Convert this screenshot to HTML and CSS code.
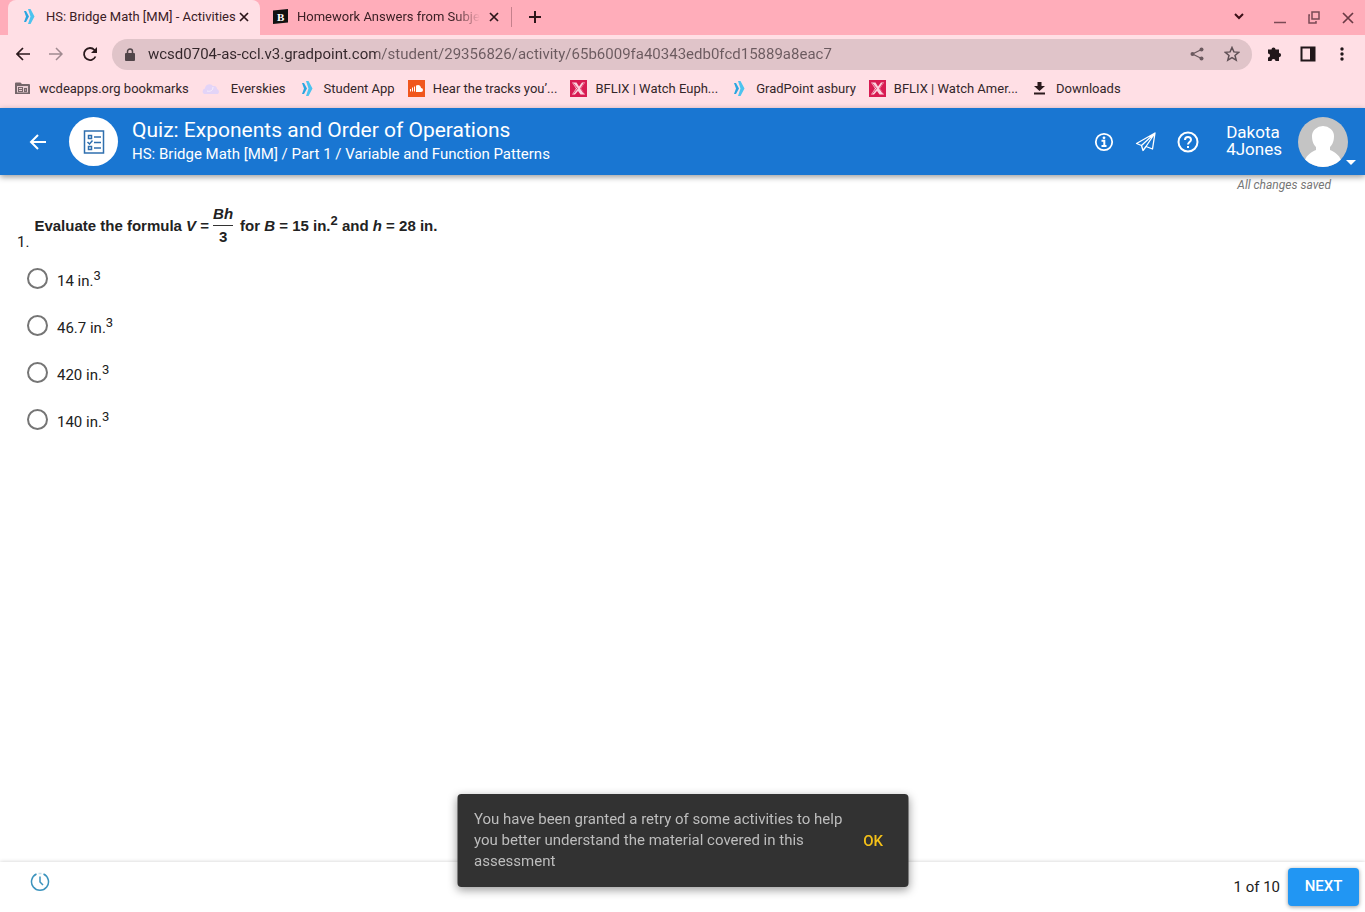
FILE: index.html
```
<!DOCTYPE html>
<html lang="en">
<head>
    <meta charset="UTF-8">
    <meta name="viewport" content="width=device-width, initial-scale=1.0">
    <title>HS: Bridge Math [MM] - Activities</title>
    <link rel="stylesheet" href="styles.css">
</head>
<body>

    <!-- Shared icons -->
    <svg class="sprite" width="0" height="0" aria-hidden="true">
        <symbol id="gradpoint" viewBox="0 0 17 17">
            <path d="M3 3h2l3 5.500-3 5.500H3l2-5.500z" fill="#2ba6e0"/>
            <path d="M7 1h2.500l4 7.500-4 7.500H7l2.500-7.500z" fill="#4cc3ef"/>
        </symbol>
        <symbol id="bflix" viewBox="0 0 17 17">
            <path d="M0 0h17v17H0z" fill="#d81b52"/>
            <path d="M2 2.500h4.500l2.500 4 3-4h3L11 8.500l4 6h-4.500L8 11l-3 3.500H2l4-6z" fill="#fbd3de"/>
            <path d="M3.500 3.500l4 5-4 5M14 3l-3.500 5.500 3.500 5" fill="none" stroke="#d81b52" stroke-width=".8"/>
        </symbol>
        <symbol id="close" viewBox="0 0 10 10">
            <path d="M1 1l8 8M9 1L1 9" fill="none" stroke="currentColor" stroke-width="1.700"/>
        </symbol>
    </svg>

    <!-- Browser tabs -->
    <div class="tab-strip">
        <div class="tab active">
            <svg class="favicon" viewBox="0 0 17 17"><use href="#gradpoint"/></svg>
            <span class="tab-title">HS: Bridge Math [MM] - Activities</span>
            <button class="icon-button tab-close" aria-label="Close tab"><svg width="10" height="10"><use href="#close"/></svg></button>
        </div>
        <div class="tab">
            <svg class="favicon" viewBox="0 0 17 17">
                <path d="M1 2.500l15-1.500v13.500L1 16z" fill="#111"/>
                <text x="5" y="13" class="favicon-letter">B</text>
            </svg>
            <span class="tab-title faded">Homework Answers from Subjec</span>
            <button class="icon-button tab-close" aria-label="Close tab"><svg width="10" height="10"><use href="#close"/></svg></button>
        </div>
        <button class="icon-button new-tab" aria-label="New tab">
            <svg width="14" height="14" viewBox="0 0 14 14"><path d="M7 1v12M1 7h12" stroke="#2b1519" stroke-width="2"/></svg>
        </button>
        <div class="window-buttons">
            <button class="icon-button" aria-label="Search tabs">
                <svg width="14" height="14" viewBox="0 0 14 14"><path d="M3 4l4 4 4-4" fill="none" stroke="#3b1018" stroke-width="2"/></svg>
            </button>
            <button class="icon-button" aria-label="Minimize">
                <svg width="14" height="14" viewBox="0 0 14 14"><path d="M1 12.500h12" stroke="#7a4a55" stroke-width="1.500"/></svg>
            </button>
            <button class="icon-button" aria-label="Restore">
                <svg width="14" height="14" viewBox="0 0 14 14"><path d="M5 2h7v7H5zM3 5H2v8h7v-2" fill="none" stroke="#7a4a55" stroke-width="1.500"/></svg>
            </button>
            <button class="icon-button" aria-label="Close window">
                <svg width="14" height="14" viewBox="0 0 14 14"><path d="M2 3l10 10M12 3L2 13" stroke="#6a3a45" stroke-width="1.700"/></svg>
            </button>
        </div>
    </div>

    <!-- Address bar -->
    <div class="toolbar">
        <button class="icon-button" aria-label="Back">
            <svg width="14" height="14" viewBox="0 0 14 14"><path d="M14 7H1M7 1L1 7l6 6" fill="none" stroke="#2b1a1d" stroke-width="1.700"/></svg>
        </button>
        <button class="icon-button" aria-label="Forward">
            <svg width="14" height="14" viewBox="0 0 14 14"><path d="M0 7h13M7 1l6 6-6 6" fill="none" stroke="#a08a90" stroke-width="1.500"/></svg>
        </button>
        <button class="icon-button" aria-label="Reload">
            <svg width="16" height="16" viewBox="0 0 16 16"><path d="M13.500 10.500A6 6 0 1 1 12.500 4L14 5.500" fill="none" stroke="#2b1a1d" stroke-width="1.800"/><path d="M15 1v6H9z" fill="#2b1a1d"/></svg>
        </button>
        <div class="address">
            <svg width="10" height="13" viewBox="0 0 10 13"><path d="M2.500 6V3.500a2.500 2.500 0 0 1 5 0V6" fill="none" stroke="#514549" stroke-width="1.500"/><rect x="0" y="5" width="10" height="8" rx="1" fill="#514549"/></svg>
            <input type="text" class="url" aria-label="Address" value="wcsd0704-as-ccl.v3.gradpoint.com/student/29356826/activity/65b6009fa40343edb0fcd15889a8eac7">
            <button class="icon-button" aria-label="Share">
                <svg width="14" height="14" viewBox="0 0 14 14"><path d="M11.500 2.500L2.500 7l9 4.500" fill="none" stroke="#6b595e" stroke-width="1.300"/><g fill="#6b595e"><circle cx="11.500" cy="2.500" r="2"/><circle cx="2.500" cy="7" r="2"/><circle cx="11.500" cy="11.500" r="2"/></g></svg>
            </button>
            <button class="icon-button" aria-label="Bookmark this tab">
                <svg width="16" height="16" viewBox="0 0 16 16"><path d="M8 1.500l1.900 4.400 4.800.4-3.700 3.100 1.200 4.700L8 11.600l-4.200 2.500L5 9.400 1.300 6.300l4.800-.4z" fill="none" stroke="#5f5055" stroke-width="1.500"/></svg>
            </button>
        </div>
        <div class="toolbar-end">
            <button class="icon-button" aria-label="Extensions">
                <svg width="16" height="16" viewBox="0 0 16 16"><path d="M2 3.500h3.500a2 2 0 1 1 4 0H13V7a2 2 0 1 1 0 4.200V15H9.500a2 2 0 0 0-4 0H2v-3.500a2 2 0 0 0 0-4z" fill="#21171a"/></svg>
            </button>
            <button class="icon-button" aria-label="Side panel">
                <svg width="16" height="16" viewBox="0 0 16 16"><path d="M1.500 1.500h13v13h-13z" fill="none" stroke="#21171a" stroke-width="2"/><path d="M10 1h5v14h-5z" fill="#21171a"/></svg>
            </button>
            <button class="icon-button" aria-label="Menu">
                <svg width="16" height="16" viewBox="0 0 16 16" fill="#21171a"><circle cx="8" cy="3" r="1.700"/><circle cx="8" cy="8" r="1.700"/><circle cx="8" cy="13" r="1.700"/></svg>
            </button>
        </div>
    </div>

    <!-- Bookmarks -->
    <nav class="bookmarks">
        <a href="#"><svg viewBox="0 0 17 17"><path d="M1 3.500a1 1 0 0 1 1-1h4.500L8 4h7a1 1 0 0 1 1 1v9H1z" fill="#75666a"/><path d="M3 6h11v6.500H3z" fill="#e8cdd3"/><path d="M4 7h5v5H4zM10 8h3v4h-3z" fill="#75666a"/><path d="M5 8.500h3M5 10.500h3M11 10h1" stroke="#e8cdd3"/></svg>wcdeapps.org bookmarks</a>
        <a href="#"><svg class="wide" viewBox="0 0 21 17"><path d="M2 14a3 3 0 0 1 1-5.500 4.500 4.500 0 0 1 8-2.500c3-.5 4 1 4 3a3 3 0 0 1 1 5z" fill="#e3d4f7"/><path d="M5 11c4 1 6-1 6-4" fill="none" stroke="#f8effb"/></svg>Everskies</a>
        <a href="#"><svg viewBox="0 0 17 17"><use href="#gradpoint"/></svg>Student App</a>
        <a href="#"><svg viewBox="0 0 17 17"><path d="M0 0h17v17H0z" fill="#f0561d"/><path d="M2.500 9v2.500M4.500 7.500v4M6.500 6.500v5" stroke="#fff"/><path d="M8 5.500c3-1.500 5 .5 5 2.500a2 2 0 0 1 0 4H8z" fill="#fff"/></svg>Hear the tracks you’...</a>
        <a href="#"><svg viewBox="0 0 17 17"><use href="#bflix"/></svg>BFLIX | Watch Euph...</a>
        <a href="#"><svg viewBox="0 0 17 17"><use href="#gradpoint"/></svg>GradPoint asbury</a>
        <a href="#"><svg viewBox="0 0 17 17"><use href="#bflix"/></svg>BFLIX | Watch Amer...</a>
        <a href="#"><svg viewBox="0 0 17 17"><path d="M6.500 2h4v4H14l-5.500 5L3 6h3.500zM3 12.500h11v2H3z" fill="#2b1a1d"/></svg>Downloads</a>
    </nav>

    <!-- Activity header -->
    <header class="app-header">
        <button class="icon-button back" aria-label="Back">
            <svg width="18" height="18" viewBox="0 0 18 18"><path d="M17 9H2M9 2L2 9l7 7" fill="none" stroke="#fff" stroke-width="2"/></svg>
        </button>
        <div class="activity-icon">
            <svg width="22" height="26" viewBox="0 0 22 26" fill="none" stroke="#2f6fae" stroke-width="1.500"><path d="M1.500 2h19v22h-19zM5.500 6.500h3v3h-3zM5.500 17.500h3v3h-3zM11 8h7M11 13.500h7M11 19h7M4.500 13l2 2 3-3.500"/></svg>
        </div>
        <div class="heading">
            <h1>Quiz: Exponents and Order of Operations</h1>
            <p>HS: Bridge Math [MM] / Part 1 / Variable and Function Patterns</p>
        </div>
        <div class="header-actions">
            <button class="icon-button" aria-label="Information">
                <svg width="22" height="22" viewBox="0 0 22 22"><circle cx="11" cy="11" r="8.200" fill="none" stroke="#fff" stroke-width="1.800"/><path d="M8.500 9.800h2.800v5M8.500 15h5" fill="none" stroke="#fff" stroke-width="2"/><circle cx="11" cy="6.800" r="1.400" fill="#fff"/></svg>
            </button>
            <button class="icon-button" aria-label="Send message">
                <svg width="22" height="22" viewBox="0 0 22 22" fill="none" stroke="#fff" stroke-width="1.300" stroke-linejoin="round"><path d="M20 2L1.500 12.500l5 2L20 2l-2.500 16-6.500-2.500L20 2M6.500 14.500l1.500 5 3-4"/></svg>
            </button>
            <button class="icon-button" aria-label="Help">
                <svg width="22" height="22" viewBox="0 0 22 22" fill="none" stroke="#fff" stroke-width="2"><circle cx="11" cy="11" r="9.500"/><path d="M8 9c0-4 6-4 6-.3 0 2.200-3 2.300-3 4.800M11 15v2"/></svg>
            </button>
        </div>
        <button class="user">
            <span class="user-name">Dakota<br>4Jones</span>
            <svg class="avatar" viewBox="0 0 50 50"><defs><clipPath id="round"><circle cx="25" cy="25" r="25"/></clipPath></defs><g clip-path="url(#round)"><path d="M0 0h50v50H0z" fill="#c4c4c4"/><path d="M14 19a11 10 0 0 1 22 0c0 6-2 9-4 11v3c5 2 9 5 11 10v8H7v-8c2-5 6-8 11-10v-3c-2-2-4-5-4-11z" fill="#fff"/></g></svg>
            <span class="caret"></span>
        </button>
    </header>

    <!-- Question -->
    <main>
        <p class="save-status">All changes saved</p>
        <form id="quiz">
            <fieldset>
                <legend class="question">
                    <span class="number">1.</span>
                    <span class="formula">
                        <span>Evaluate the formula <i>V</i> =</span>
                        <span class="fraction"><i>Bh</i><span class="denominator">3</span></span>
                        <span>for <i>B</i> = 15 in.<sup>2</sup> and <i>h</i> = 28 in.</span>
                    </span>
                </legend>
                <label class="answer"><input type="radio" name="answer" value="14"><span>14 in.<sup>3</sup></span></label>
                <label class="answer"><input type="radio" name="answer" value="46.7"><span>46.7 in.<sup>3</sup></span></label>
                <label class="answer"><input type="radio" name="answer" value="420"><span>420 in.<sup>3</sup></span></label>
                <label class="answer"><input type="radio" name="answer" value="140"><span>140 in.<sup>3</sup></span></label>
            </fieldset>
        </form>
    </main>

    <!-- Footer with paging -->
    <footer>
        <button class="icon-button timer" aria-label="Timer">
            <svg width="20" height="20" viewBox="0 0 20 20" fill="none" stroke="#3b93bd" stroke-width="1.500"><path d="M6.500 2A8.500 8.500 0 1 0 13.500 2M10 4.500V10l3 3"/><path d="M8.500 1.500h3" stroke-opacity=".3"/></svg>
        </button>
        <span class="page-count">1 of 10</span>
        <button class="next" type="submit" form="quiz">NEXT</button>
    </footer>

    <!-- Retry message -->
    <div class="snackbar" role="status">
        <p>You have been granted a retry of some activities to help you better understand the material covered in this assessment</p>
        <button class="ok">OK</button>
    </div>

</body>
</html>
```
FILE: styles.css
```
* {
    box-sizing: border-box;
}

body {
    display: flex;
    flex-direction: column;
    min-height: 100vh;
    margin: 0;
    font-family: Roboto, "Liberation Sans", sans-serif;
    color: #212121;
    background: #fff;
}

h1, p {
    margin: 0;
    font-weight: normal;
}

button {
    font-family: inherit;
    border: none;
    cursor: pointer;
}

.sprite {
    position: absolute;
}

.icon-button {
    display: flex;
    padding: 0;
    background: none;
}

/* Browser tabs */
.tab-strip {
    display: flex;
    align-items: center;
    height: 35px;
    padding: 0 0 2px 8px;
    background: #ffadba;
}

.tab {
    display: flex;
    align-items: center;
    width: 252px;
    height: 20px;
    padding: 0 12px;
    font-size: 13px;
    color: #3b2025;
    border-right: 1px solid #c5808c;
}

.tab.active {
    align-self: flex-start;
    height: 35px;
    padding: 0 11px 2px 13px;
    border: none;
    border-radius: 8px 8px 0 0;
    background: #ffdfe5;
}

.favicon {
    width: 17px;
    height: 17px;
    margin-right: 8px;
}

.favicon-letter {
    font: bold 11px "Liberation Serif", serif;
    fill: #fff;
}

.tab-title {
    flex: 1;
    white-space: nowrap;
}

.faded {
    overflow: hidden;
    margin-right: 9px;
    mask-image: linear-gradient(to right, #000 86%, transparent);
}

.tab-close {
    color: #2b1519;
}

.new-tab {
    margin-left: 16px;
}

.window-buttons {
    display: flex;
    gap: 20px;
    margin-left: auto;
    padding-right: 10px;
}

.window-buttons .icon-button:first-child {
    margin-right: 7px;
}

/* Address bar and bookmarks */
.toolbar {
    display: flex;
    align-items: center;
    gap: 19px;
    height: 38px;
    padding: 0 15px 0 16px;
    background: #ffdfe5;
}

.address {
    display: flex;
    flex: 1;
    align-items: center;
    gap: 20px;
    height: 31px;
    margin: 0 -5px;
    padding: 0 12px 0 13px;
    border-radius: 16px;
    background: #e0c4c9;
}

.url {
    flex: 1;
    min-width: 0;
    margin-left: -7px;
    padding: 0;
    border: none;
    outline: none;
    font: 15px Roboto, "Liberation Sans", sans-serif;
    color: transparent;
    background: linear-gradient(to right, #33262a 229px, #6b5a5f 229px);
    background-clip: text;
}

.toolbar-end {
    display: flex;
    gap: 18px;
}

.bookmarks {
    display: flex;
    gap: 13px;
    height: 35px;
    padding: 0 14px 4px;
    background: #ffdfe5;
}

.bookmarks a {
    display: flex;
    align-items: center;
    gap: 8px;
    font-size: 13px;
    white-space: nowrap;
    color: #33262a;
    text-decoration: none;
}

.bookmarks svg {
    width: 17px;
    height: 17px;
}

.bookmarks .wide {
    width: 21px;
}

/* Activity header */
.app-header {
    display: flex;
    align-items: center;
    height: 67px;
    padding: 0 17px 0 29px;
    color: #fff;
    background: #1976d2;
    box-shadow: 0 2px 6px rgba(0, 0, 0, 0.4);
}

.activity-icon {
    display: flex;
    align-items: center;
    justify-content: center;
    width: 49px;
    height: 49px;
    margin: 0 14px 0 22px;
    border-radius: 50%;
    background: #fff;
}

.heading {
    padding-bottom: 2px;
}

.heading h1 {
    font-size: 21px;
    line-height: 26px;
}

.heading p {
    font-size: 15px;
    line-height: 22px;
}

.header-actions {
    display: flex;
    gap: 20px;
    margin-left: auto;
}

.user {
    position: relative;
    display: flex;
    align-items: center;
    gap: 16px;
    margin-left: 27px;
    padding: 0;
    text-align: left;
    color: inherit;
    background: none;
}

.user-name {
    padding-bottom: 2px;
    font-size: 17px;
    line-height: 17px;
}

.avatar {
    width: 50px;
    height: 50px;
}

.caret {
    position: absolute;
    right: -8px;
    bottom: 2px;
    border: 5px solid transparent;
    border-top-color: #fff;
    border-bottom: none;
}

/* Question */
main {
    flex: 1;
}

.save-status {
    padding: 3px 34px 0 0;
    font-size: 12px;
    line-height: 14px;
    font-style: italic;
    text-align: right;
    color: #757575;
}

fieldset {
    margin: 0;
    padding: 0 0 0 17px;
    border: none;
}

.question {
    display: flex;
    align-items: flex-end;
    gap: 5px;
    padding: 11px 0 3px;
    font-size: 15px;
}

.number {
    line-height: 20px;
}

.formula {
    display: flex;
    align-items: center;
    gap: 4px;
    padding-bottom: 4px;
    font: bold 15px "Liberation Sans", sans-serif;
    color: #222;
}

.fraction {
    display: flex;
    flex-direction: column;
    align-items: center;
    margin-right: 3px;
    line-height: 22px;
}

.denominator {
    width: 100%;
    text-align: center;
    border-top: 1px solid #333;
}

sup {
    font-size: 13px;
    line-height: 0;
}

.answer {
    display: flex;
    align-items: center;
    gap: 9px;
    width: fit-content;
    height: 47px;
    padding-left: 10px;
    font-size: 15px;
}

.answer input {
    appearance: none;
    width: 21px;
    height: 21px;
    margin: 0;
    border: 2px solid #757575;
    border-radius: 50%;
}

.answer input:checked {
    border: 6px solid #1976d2;
}

.answer span {
    padding-top: 4px;
}

/* Footer */
footer {
    display: flex;
    align-items: center;
    height: 50px;
    padding: 0 6px 0 30px;
    box-shadow: 0 0 4px rgba(0, 0, 0, 0.2);
}

.page-count {
    margin: 0 8px 0 auto;
    font-size: 15px;
}

.next {
    width: 71px;
    height: 38px;
    padding: 0 0 2px;
    border-radius: 4px;
    font-size: 15px;
    font-weight: 500;
    color: #fff;
    background: #2196f3;
    box-shadow: 0 1px 4px rgba(0, 0, 0, 0.4);
}

.timer {
    margin-bottom: 10px;
}

/* Retry message, floats over the footer */
.snackbar {
    position: fixed;
    left: 50%;
    bottom: 25px;
    display: flex;
    align-items: center;
    justify-content: space-between;
    width: 451px;
    padding: 15px 17px;
    transform: translateX(-50%);
    border-radius: 4px;
    background: #323232;
    box-shadow: 0 3px 10px rgba(0, 0, 0, 0.4);
}

.snackbar p {
    width: 370px;
    font-size: 15px;
    line-height: 21px;
    color: #bdbdbd;
}

.ok {
    padding: 8px;
    font-size: 15px;
    font-weight: 500;
    color: #f5c118;
    background: none;
}
```
